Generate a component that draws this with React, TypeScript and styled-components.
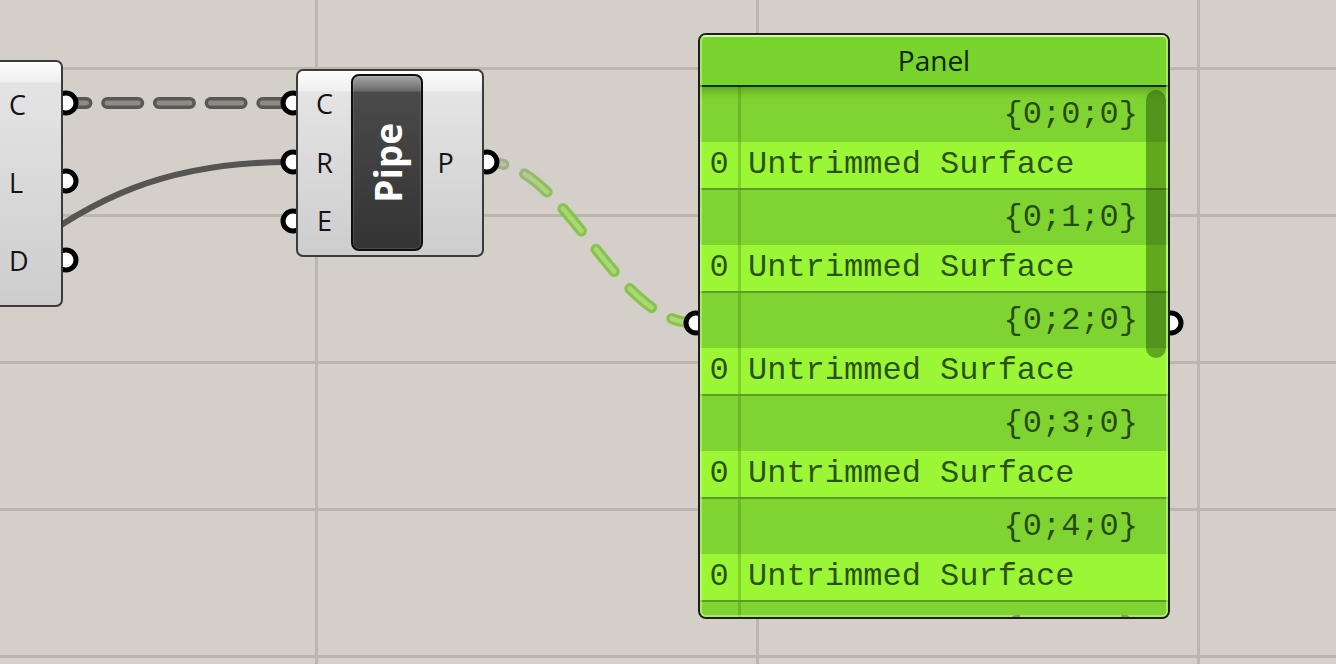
import styled, { createGlobalStyle } from "styled-components";

const GlobalStyle = createGlobalStyle`
  html, body {
    margin: 0;
    padding: 0;
    background: #d4d0c9;
    overflow: hidden;
  }
`;

const Canvas = styled.div`
  position: relative;
  width: 1336px;
  height: 664px;
  overflow: hidden;
  background-color: #d4d0c9;
  background-image:
    linear-gradient(90deg, #bbb7b0 0, #bbb7b0 3px, transparent 3px),
    linear-gradient(180deg, #bbb7b0 0, #bbb7b0 3px, transparent 3px);
  background-size: 441px 100%, 100% 147px;
  background-position: 315px 0, 0 67px;
  font-family: "Open Sans", "Noto Sans", sans-serif;
`;

const WireLayer = styled.svg`
  position: absolute;
  left: 0;
  top: 0;
`;

interface IBox {
  $x: number;
  $y: number;
  $w: number;
  $h: number;
}

const ComponentBox = styled.div<IBox>`
  position: absolute;
  left: ${(p) => p.$x}px;
  top: ${(p) => p.$y}px;
  width: ${(p) => p.$w}px;
  height: ${(p) => p.$h}px;
  box-sizing: border-box;
  display: flex;
  border: 2px solid #3b3b3b;
  border-radius: 7px;
  background: linear-gradient(
    180deg,
    #fdfdfd 0,
    #efefef 20px,
    #e4e4e4 21px,
    #cdcdcd 100%
  );
`;

const ParamColumn = styled.div<{ $width?: number; $padLeft?: number; $padRight?: number }>`
  display: flex;
  flex-direction: column;
  width: ${(p) => (p.$width ? `${p.$width}px` : "auto")};
  flex: ${(p) => (p.$width ? "none" : "1")};
  padding: 3px ${(p) => p.$padRight ?? 0}px 5px ${(p) => p.$padLeft ?? 0}px;
  box-sizing: border-box;
`;

const ParamRow = styled.div<{ $align?: "start" | "center" }>`
  flex: 1;
  display: flex;
  align-items: center;
  justify-content: ${(p) => (p.$align === "start" ? "flex-start" : "center")};
`;

const ParamLabel = styled.span`
  font-size: 27px;
  line-height: 1;
  color: #141414;
`;

const Capsule = styled.div`
  flex: none;
  width: 72px;
  margin: 3px 0 4px;
  box-sizing: border-box;
  display: flex;
  align-items: center;
  justify-content: center;
  border: 2px solid #0e0e0e;
  border-radius: 8px;
  background: linear-gradient(
    180deg,
    #a6a6a6 0,
    #6a6a6a 15px,
    #4a4a4a 16px,
    #3f3f3f 55%,
    #343434 100%
  );
  box-shadow: inset 0 0 0 1px rgba(255, 255, 255, 0.12);
`;

const CapsuleText = styled.span`
  writing-mode: vertical-rl;
  transform: rotate(180deg);
  color: #fff;
  font-weight: 700;
  font-size: 37px;
  line-height: 1;
`;

const PanelFrame = styled.div`
  position: absolute;
  left: 698px;
  top: 33px;
  width: 472px;
  height: 586px;
  box-sizing: border-box;
  display: flex;
  flex-direction: column;
  border: 2px solid #1e1e1e;
  border-radius: 8px;
  overflow: hidden;
  background: #80d431;
  font-family: "Liberation Mono", "DejaVu Sans Mono", monospace;

  &::after {
    content: "";
    position: absolute;
    inset: 0;
    border-radius: 6px;
    box-shadow: inset 0 0 0 2px rgba(205, 255, 160, 0.5);
    pointer-events: none;
  }
`;

const PanelHeader = styled.div`
  flex: none;
  height: 50px;
  display: flex;
  align-items: center;
  justify-content: center;
  background: #79d32d;
  border-bottom: 2px solid #132c00;
  box-shadow: inset 0 2px 0 rgba(240, 255, 228, 0.85);
  font-family: "Open Sans", "Noto Sans", sans-serif;
  font-size: 28px;
  color: #0f2400;
`;

const Row = styled.div<{ $kind: "path" | "item"; $first?: boolean }>`
  flex: none;
  display: grid;
  grid-template-columns: 41px 1fr;
  box-sizing: border-box;
  height: ${(p) => (p.$kind === "path" ? 55 : 48)}px;
  background: ${(p) => (p.$kind === "path" ? "#80d431" : "#9bf636")};
  border-bottom: ${(p) => (p.$kind === "item" ? "2px solid #5c9c28" : "none")};
  box-shadow: ${(p) =>
    p.$first ? "inset 0 12px 10px -8px rgba(20, 70, 0, 0.35)" : "none"};
  font-size: 32px;
  line-height: 1;
  color: rgba(16, 44, 2, 0.82);
`;

const IndexCell = styled.div`
  display: flex;
  align-items: center;
  justify-content: center;
  box-sizing: border-box;
  border-right: 3px solid rgba(50, 100, 10, 0.25);
`;

const ValueCell = styled.div<{ $right?: boolean }>`
  display: flex;
  align-items: center;
  justify-content: ${(p) => (p.$right ? "flex-end" : "flex-start")};
  padding: ${(p) => (p.$right ? "0 30px 0 0" : "0 0 0 7px")};
  white-space: pre;
`;

const Scrollbar = styled.div`
  position: absolute;
  left: 446px;
  top: 55px;
  width: 20px;
  height: 268px;
  border-radius: 10px;
  background: rgba(20, 60, 0, 0.42);
`;

const items = ["{0;0;0}", "{0;1;0}", "{0;2;0}", "{0;3;0}", "{0;4;0}"];

function Grip({ x, y }: { x: number; y: number }) {
  return <circle cx={x} cy={y} r={10} fill="#fff" stroke="#000" strokeWidth={5} />;
}

function Wires() {
  const green = "M 487 162 C 567 162, 614 323, 695 323";
  return (
    <WireLayer width={1336} height={664} viewBox="0 0 1336 664">
      <defs>
        <linearGradient id="gOuter" gradientUnits="userSpaceOnUse" x1="487" y1="162" x2="560" y2="200">
          <stop offset="0" stopColor="#a0a893" />
          <stop offset="1" stopColor="#80c13f" />
        </linearGradient>
        <linearGradient id="gInner" gradientUnits="userSpaceOnUse" x1="487" y1="162" x2="560" y2="200">
          <stop offset="0" stopColor="#b9bdae" />
          <stop offset="1" stopColor="#a4db6a" />
        </linearGradient>
      </defs>

      <path d="M 0 270 C 90 195, 170 162, 290 162" fill="none" stroke="#575551" strokeWidth={6} />

      <path
        d="M 66 103 L 292 103"
        fill="none"
        stroke="#5a5854"
        strokeWidth={12}
        strokeLinecap="round"
        strokeDasharray="31 20.7"
        strokeDashoffset={10.5}
      />
      <path
        d="M 66 103 L 292 103"
        fill="none"
        stroke="#8e8b86"
        strokeWidth={5}
        strokeLinecap="round"
        strokeDasharray="31 20.7"
        strokeDashoffset={10.5}
      />

      <g opacity={0.88}>
        <path
          d={green}
          fill="none"
          stroke="url(#gOuter)"
          strokeWidth={11}
          strokeLinecap="round"
          strokeDasharray="29 23"
          strokeDashoffset={12}
        />
        <path
          d={green}
          fill="none"
          stroke="url(#gInner)"
          strokeWidth={4.5}
          strokeLinecap="round"
          strokeDasharray="29 23"
          strokeDashoffset={12}
        />
      </g>

      <Grip x={66} y={103} />
      <Grip x={66} y={181} />
      <Grip x={66} y={260} />
      <Grip x={293} y={103} />
      <Grip x={293} y={162} />
      <Grip x={293} y={221} />
      <Grip x={487} y={162} />
      <Grip x={696} y={323} />
      <Grip x={1171} y={323} />
    </WireLayer>
  );
}

export default function App() {
  return (
    <>
      <GlobalStyle />
      <Canvas>
        <Wires />

        <ComponentBox $x={-20} $y={60} $w={83} $h={247}>
          <ParamColumn $padLeft={27}>
            {["C", "L", "D"].map((n) => (
              <ParamRow key={n} $align="start">
                <ParamLabel>{n}</ParamLabel>
              </ParamRow>
            ))}
          </ParamColumn>
        </ComponentBox>

        <ComponentBox $x={296} $y={69} $w={188} $h={188}>
          <ParamColumn $width={53}>
            {["C", "R", "E"].map((n) => (
              <ParamRow key={n}>
                <ParamLabel>{n}</ParamLabel>
              </ParamRow>
            ))}
          </ParamColumn>
          <Capsule>
            <CapsuleText>Pipe</CapsuleText>
          </Capsule>
          <ParamColumn $padRight={14}>
            <ParamRow>
              <ParamLabel>P</ParamLabel>
            </ParamRow>
          </ParamColumn>
        </ComponentBox>

        <PanelFrame>
          <PanelHeader>Panel</PanelHeader>
          {items.map((p, i) => (
            <div key={p} style={{ display: "contents" }}>
              <Row $kind="path" $first={i === 0}>
                <IndexCell />
                <ValueCell $right>{p}</ValueCell>
              </Row>
              <Row $kind="item">
                <IndexCell>0</IndexCell>
                <ValueCell>Untrimmed Surface</ValueCell>
              </Row>
            </div>
          ))}
          <Row $kind="path">
            <IndexCell />
            <ValueCell $right>{"{0;5;0}"}</ValueCell>
          </Row>
          <Scrollbar />
        </PanelFrame>
      </Canvas>
    </>
  );
}
